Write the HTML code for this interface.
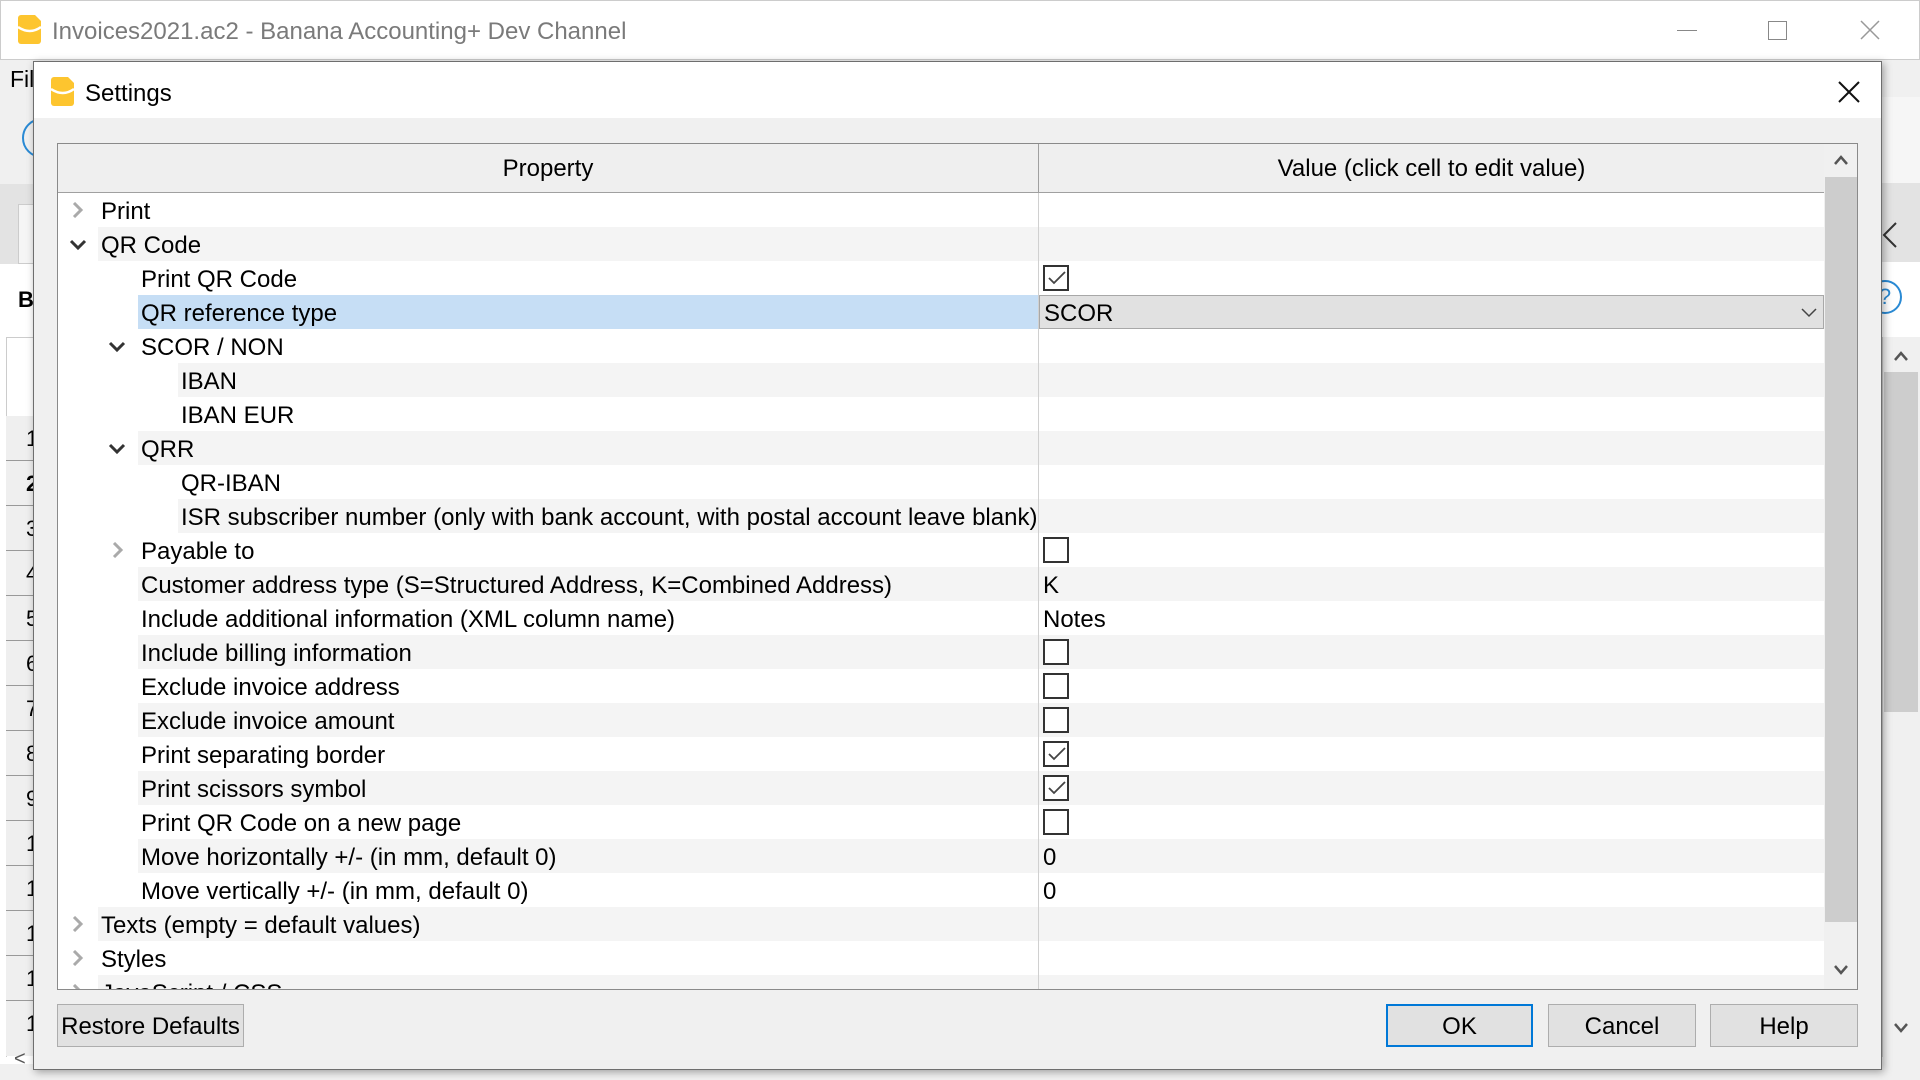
<!DOCTYPE html>
<html><head><meta charset="utf-8"><style>
*{box-sizing:border-box;margin:0;padding:0}
body{width:1920px;height:1080px;overflow:hidden;background:#f0f0f0;font-family:"Liberation Sans",sans-serif;position:relative;color:#000}
.a{position:absolute}
.row{position:absolute;left:58px;width:1766px;height:34px;font-size:24px;line-height:34px}
.sh{position:absolute;top:0;bottom:0;background:#f4f4f4}
.t{position:absolute;top:2px;white-space:nowrap}
.v{position:absolute;left:1043px;top:2px;white-space:nowrap}
.cb{position:absolute;left:985px;top:4px;width:26px;height:26px;border:2px solid #333;background:#fff}
.btn{position:absolute;top:1004px;height:43px;background:#e1e1e1;border:1px solid #adadad;font-size:24px;line-height:43px;text-align:center}
</style></head><body>
<div class="a" style="left:0;top:0;width:1920px;height:60px;background:#fff;border:1px solid #ccc"></div>
<svg class="a" style="left:18px;top:13px" width="26" height="32" viewBox="0 0 26 32"><path d="M3 2h14l6 6v20a3 3 0 0 1-3 3H3a3 3 0 0 1-3-3V5a3 3 0 0 1 3-3z" fill="#fdc52f"/><path d="M0 14q12 8 23 0" stroke="#fff" stroke-width="2.5" fill="none"/></svg>
<div class="a" style="left:52px;top:18px;font-size:24px;color:#7a7a7a;white-space:nowrap">Invoices2021.ac2 - Banana Accounting+ Dev Channel</div>
<div class="a" style="left:1677px;top:30px;width:20px;height:1px;background:#888"></div>
<div class="a" style="left:1768px;top:21px;width:19px;height:19px;border:1.5px solid #888"></div>
<svg class="a" style="left:1860px;top:20px" width="20" height="20"><path d="M1 1L19 19M19 1L1 19" stroke="#999" stroke-width="1.5"/></svg>
<div class="a" style="left:0;top:61px;width:40px;height:1019px;background:#f0f0f0"></div>
<div class="a" style="left:10px;top:66px;font-size:23px">Fil</div>
<div class="a" style="left:22px;top:118px;width:40px;height:40px;border:2px solid #2a8ad4;border-radius:50%"></div>
<div class="a" style="left:0;top:184px;width:40px;height:80px;background:#e3e3e3"></div>
<div class="a" style="left:18px;top:204px;width:30px;height:60px;background:#f5f5f5;border:1px solid #ccc"></div>
<div class="a" style="left:0;top:264px;width:40px;height:800px;background:#fff"></div>
<div class="a" style="left:18px;top:287px;font-size:22px;font-weight:bold">Ba</div>
<div class="a" style="left:6px;top:337px;width:34px;height:720px;border-left:1px solid #ccc;border-top:1px solid #ccc"></div>
<div class="a" style="left:6px;top:416px;width:34px;height:640px;background:#efefef"></div>
<div class="a" style="left:6px;top:416px;font-size:22px;line-height:45px">
<div style="border-bottom:1px solid #999;padding-left:20px;height:45px">1</div><div style="border-bottom:1px solid #999;padding-left:20px;height:45px;font-weight:bold">2</div><div style="border-bottom:1px solid #999;padding-left:20px;height:45px">3</div><div style="border-bottom:1px solid #999;padding-left:20px;height:45px">4</div><div style="border-bottom:1px solid #999;padding-left:20px;height:45px">5</div><div style="border-bottom:1px solid #999;padding-left:20px;height:45px">6</div><div style="border-bottom:1px solid #999;padding-left:20px;height:45px">7</div><div style="border-bottom:1px solid #999;padding-left:20px;height:45px">8</div><div style="border-bottom:1px solid #999;padding-left:20px;height:45px">9</div><div style="border-bottom:1px solid #999;padding-left:20px;height:45px">1</div><div style="border-bottom:1px solid #999;padding-left:20px;height:45px">1</div><div style="border-bottom:1px solid #999;padding-left:20px;height:45px">1</div><div style="border-bottom:1px solid #999;padding-left:20px;height:45px">1</div><div style="padding-left:20px;height:45px">1</div></div>
<div class="a" style="left:14px;top:1048px;font-size:20px;color:#555">&lt;</div>
<div class="a" style="left:1882px;top:61px;width:38px;height:36px;background:#f0f0f0"></div>
<div class="a" style="left:1882px;top:97px;width:38px;height:86px;background:#f6f6f6"></div>
<div class="a" style="left:1882px;top:183px;width:38px;height:79px;background:#e3e3e3"></div>
<svg class="a" style="left:1880px;top:222px" width="20" height="26"><path d="M16 1L4 13L16 25" stroke="#333" stroke-width="2" fill="none"/></svg>
<div class="a" style="left:1882px;top:262px;width:38px;height:75px;background:#fff"></div>
<div class="a" style="left:1868px;top:280px;width:34px;height:34px;border:2px solid #2a8ad4;border-radius:50%;color:#2a8ad4;font-size:22px;text-align:center;line-height:30px">?</div>
<div class="a" style="left:1882px;top:337px;width:38px;height:720px;background:#f0f0f0;border-left:1px solid #ccc"></div>
<svg class="a" style="left:1893px;top:350px" width="16" height="12"><path d="M2 10L8 3L14 10" stroke="#555" stroke-width="2.5" fill="none"/></svg>
<div class="a" style="left:1884px;top:372px;width:34px;height:340px;background:#cdcdcd"></div>
<svg class="a" style="left:1893px;top:1022px" width="16" height="12"><path d="M2 2L8 9L14 2" stroke="#555" stroke-width="2.5" fill="none"/></svg>
<div class="a" style="left:33px;top:61px;width:1849px;height:1009px;background:#f0f0f0;border:1px solid #6e6e6e;box-shadow:2px 2px 8px rgba(0,0,0,.35)"></div>
<div class="a" style="left:34px;top:62px;width:1847px;height:56px;background:#fff"></div>
<svg class="a" style="left:51px;top:74px" width="26" height="34" viewBox="0 0 26 32"><path d="M3 2h14l6 6v20a3 3 0 0 1-3 3H3a3 3 0 0 1-3-3V5a3 3 0 0 1 3-3z" fill="#fdc52f"/><path d="M0 14q12 8 23 0" stroke="#fff" stroke-width="2.5" fill="none"/></svg>
<div class="a" style="left:85px;top:80px;font-size:24px">Settings</div>
<svg class="a" style="left:1838px;top:81px" width="22" height="22"><path d="M1 1L21 21M21 1L1 21" stroke="#111" stroke-width="2"/></svg>
<div class="a" style="left:57px;top:143px;width:1801px;height:847px;background:#fff;border:1px solid #8a8a8a"></div>
<div class="a" style="left:58px;top:144px;width:1766px;height:49px;background:#efefef;border-bottom:1px solid #a0a0a0;font-size:24px;line-height:50px">
<div class="a" style="left:0;width:980px;text-align:center">Property</div>
<div class="a" style="left:981px;width:785px;text-align:center">Value (click cell to edit value)</div></div>
<div class="a" style="left:1824px;top:144px;width:33px;height:845px;background:#f0f0f0"></div>
<svg class="a" style="left:1833px;top:154px" width="16" height="12"><path d="M2 10L8 3L14 10" stroke="#555" stroke-width="2.5" fill="none"/></svg>
<div class="a" style="left:1825px;top:177px;width:32px;height:745px;background:#cdcdcd"></div>
<svg class="a" style="left:1833px;top:964px" width="16" height="12"><path d="M2 2L8 9L14 2" stroke="#555" stroke-width="2.5" fill="none"/></svg>
<div class="a" style="left:58px;top:193px;width:1766px;height:796px;overflow:hidden">
<div style="position:relative;top:-193px;left:-58px">
<div class="row" style="top:193px"><svg class="a" style="left:14px;top:9px" width="12" height="16"><path d="M2 1L9 8L2 15" stroke="#aaa" stroke-width="3" fill="none"/></svg><div class="t" style="left:43px">Print</div></div>
<div class="row" style="top:227px"><div class="sh" style="left:40px;right:0"></div><svg class="a" style="left:11px;top:12px" width="18" height="12"><path d="M2 2L9 9L16 2" stroke="#333" stroke-width="3" fill="none"/></svg><div class="t" style="left:43px">QR Code</div></div>
<div class="row" style="top:261px"><div class="t" style="left:83px">Print QR Code</div><div class="cb"></div><svg class="a" style="left:990px;top:10px" width="18" height="14"><path d="M1 7L6 12L17 1" stroke="#444" stroke-width="1.8" fill="none"/></svg></div>
<div class="row" style="top:295px"><div class="sh" style="left:80px;width:900px;background:#c6def5"></div><div class="t" style="left:83px">QR reference type</div><div class="a" style="left:981px;right:0;top:0;bottom:0;background:#e1e1e1;border:1px solid #a8a8a8"></div><div class="v" style="left:986px">SCOR</div><svg class="a" style="left:1743px;top:13px" width="16" height="10"><path d="M1 1L8 8L15 1" stroke="#444" stroke-width="1.5" fill="none"/></svg></div>
<div class="row" style="top:329px"><svg class="a" style="left:50px;top:12px" width="18" height="12"><path d="M2 2L9 9L16 2" stroke="#333" stroke-width="3" fill="none"/></svg><div class="t" style="left:83px">SCOR / NON</div></div>
<div class="row" style="top:363px"><div class="sh" style="left:120px;right:0"></div><div class="t" style="left:123px">IBAN</div></div>
<div class="row" style="top:397px"><div class="t" style="left:123px">IBAN EUR</div></div>
<div class="row" style="top:431px"><div class="sh" style="left:80px;right:0"></div><svg class="a" style="left:50px;top:12px" width="18" height="12"><path d="M2 2L9 9L16 2" stroke="#333" stroke-width="3" fill="none"/></svg><div class="t" style="left:83px">QRR</div></div>
<div class="row" style="top:465px"><div class="t" style="left:123px">QR-IBAN</div></div>
<div class="row" style="top:499px"><div class="sh" style="left:120px;right:0"></div><div class="t" style="left:123px">ISR subscriber number (only with bank account, with postal account leave blank)</div></div>
<div class="row" style="top:533px"><svg class="a" style="left:54px;top:9px" width="12" height="16"><path d="M2 1L9 8L2 15" stroke="#aaa" stroke-width="3" fill="none"/></svg><div class="t" style="left:83px">Payable to</div><div class="cb"></div></div>
<div class="row" style="top:567px"><div class="sh" style="left:80px;right:0"></div><div class="t" style="left:83px">Customer address type (S=Structured Address, K=Combined Address)</div><div class="v" style="left:985px">K</div></div>
<div class="row" style="top:601px"><div class="t" style="left:83px">Include additional information (XML column name)</div><div class="v" style="left:985px">Notes</div></div>
<div class="row" style="top:635px"><div class="sh" style="left:80px;right:0"></div><div class="t" style="left:83px">Include billing information</div><div class="cb"></div></div>
<div class="row" style="top:669px"><div class="t" style="left:83px">Exclude invoice address</div><div class="cb"></div></div>
<div class="row" style="top:703px"><div class="sh" style="left:80px;right:0"></div><div class="t" style="left:83px">Exclude invoice amount</div><div class="cb"></div></div>
<div class="row" style="top:737px"><div class="t" style="left:83px">Print separating border</div><div class="cb"></div><svg class="a" style="left:990px;top:10px" width="18" height="14"><path d="M1 7L6 12L17 1" stroke="#444" stroke-width="1.8" fill="none"/></svg></div>
<div class="row" style="top:771px"><div class="sh" style="left:80px;right:0"></div><div class="t" style="left:83px">Print scissors symbol</div><div class="cb"></div><svg class="a" style="left:990px;top:10px" width="18" height="14"><path d="M1 7L6 12L17 1" stroke="#444" stroke-width="1.8" fill="none"/></svg></div>
<div class="row" style="top:805px"><div class="t" style="left:83px">Print QR Code on a new page</div><div class="cb"></div></div>
<div class="row" style="top:839px"><div class="sh" style="left:80px;right:0"></div><div class="t" style="left:83px">Move horizontally +/- (in mm, default 0)</div><div class="v" style="left:985px">0</div></div>
<div class="row" style="top:873px"><div class="t" style="left:83px">Move vertically +/- (in mm, default 0)</div><div class="v" style="left:985px">0</div></div>
<div class="row" style="top:907px"><div class="sh" style="left:40px;right:0"></div><svg class="a" style="left:14px;top:9px" width="12" height="16"><path d="M2 1L9 8L2 15" stroke="#aaa" stroke-width="3" fill="none"/></svg><div class="t" style="left:43px">Texts (empty = default values)</div></div>
<div class="row" style="top:941px"><svg class="a" style="left:14px;top:9px" width="12" height="16"><path d="M2 1L9 8L2 15" stroke="#aaa" stroke-width="3" fill="none"/></svg><div class="t" style="left:43px">Styles</div></div>
<div class="row" style="top:975px"><div class="sh" style="left:40px;right:0"></div><svg class="a" style="left:14px;top:9px" width="12" height="16"><path d="M2 1L9 8L2 15" stroke="#aaa" stroke-width="3" fill="none"/></svg><div class="t" style="left:43px">JavaScript / CSS</div></div>
<div class="a" style="left:1038px;top:193px;width:1px;height:800px;background:#d0d0d0"></div>
</div></div>
<div class="a" style="left:1038px;top:144px;width:1px;height:49px;background:#a0a0a0"></div>
<div class="btn" style="left:57px;width:187px">Restore Defaults</div>
<div class="btn" style="left:1386px;width:147px;border:2px solid #0078d7;line-height:41px">OK</div>
<div class="btn" style="left:1548px;width:148px">Cancel</div>
<div class="btn" style="left:1710px;width:148px">Help</div>
</body></html>
